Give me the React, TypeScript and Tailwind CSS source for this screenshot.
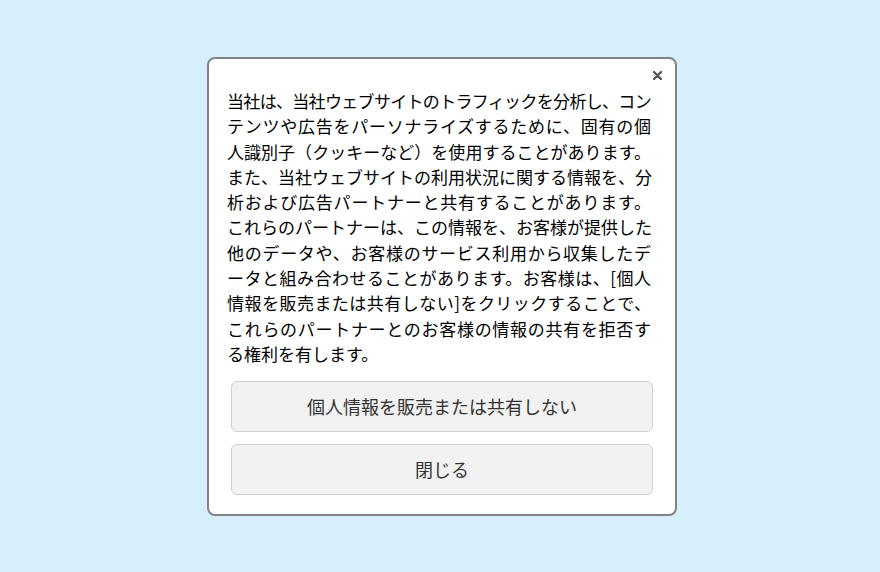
const lines = [
  "当社は、当社ウェブサイトのトラフィックを分析し、コン",
  "テンツや広告をパーソナライズするために、固有の個",
  "人識別子（クッキーなど）を使用することがあります。",
  "また、当社ウェブサイトの利用状況に関する情報を、分",
  "析および広告パートナーと共有することがあります。",
  "これらのパートナーは、この情報を、お客様が提供した",
  "他のデータや、お客様のサービス利用から収集したデ",
  "ータと組み合わせることがあります。お客様は、[個人",
  "情報を販売または共有しない]をクリックすることで、",
  "これらのパートナーとのお客様の情報の共有を拒否す",
];

function ConsentButton({ children }: { children: React.ReactNode }) {
  return (
    <button
      type="button"
      className="h-[51px] w-full rounded-md border border-[#d0d0d0] bg-[#f2f2f2] text-[18px] text-[#333]"
    >
      {children}
    </button>
  );
}

export default function App() {
  return (
    <div
      className="flex h-[572px] w-[880px] items-start justify-center bg-[#d7effb] pl-[4px] pt-[57px]"
      style={{ fontFamily: '"Noto Sans CJK JP", "Noto Sans", sans-serif' }}
    >
      <div className="relative w-[470px] rounded-lg border-2 border-[#808488] bg-white pb-[19px] pl-[18px] pr-[22px] pt-[29px]">
        <button type="button" className="absolute right-[13px] top-[12px] text-[#555]">
          <svg width="9" height="9" viewBox="0 0 9 9" className="block">
            <path d="M1 1L8 8M8 1L1 8" stroke="currentColor" strokeWidth="2.4" strokeLinecap="round" />
          </svg>
        </button>
        <p className="pr-[2px] text-[17px] leading-[25.3px] text-black">
          {lines.map((line, i) => (
            <span
              key={line}
              className={`block whitespace-nowrap [text-align-last:justify] ${i === 0 ? "tracking-[-0.7px]" : ""}`}
            >
              {line}
            </span>
          ))}
          <span className="block whitespace-nowrap">る権利を有します。</span>
        </p>
        <div className="mt-[15px] flex flex-col gap-[12px] pl-[4px]">
          <ConsentButton>個人情報を販売または共有しない</ConsentButton>
          <ConsentButton>閉じる</ConsentButton>
        </div>
      </div>
    </div>
  );
}
